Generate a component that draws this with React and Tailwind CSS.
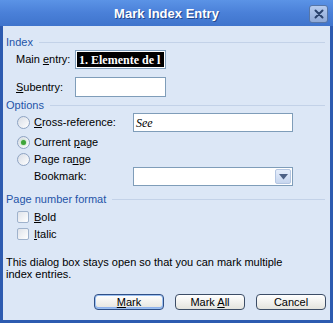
import React from 'react';

const font = "font-['Liberation_Sans',Arial,sans-serif]";

const U = ({ children }) => <span className="underline underline-offset-[1px]">{children}</span>;

const SectionHead = ({ title }) => (
  <div className="flex items-center h-4 gap-[6px] pr-[5px]">
    <span className="text-[#1f54a8]">{title}</span>
    <div className="flex-1 h-px bg-[#c3d2e8]" />
  </div>
);

const Radio = ({ checked }) => (
  <span className="w-[13px] h-[13px] rounded-full border border-[#8ea3c2] bg-gradient-to-br from-[#d8dde6] to-white flex items-center justify-center shrink-0">
    {checked && <span className="w-[5px] h-[5px] rounded-full bg-[#3fa53a] shadow-[0_0_2px_#7bd46f]" />}
  </span>
);

const Check = () => (
  <span className="w-[12px] h-[12px] rounded-[2px] border border-[#9fb2cc] bg-gradient-to-br from-[#dfe3ea] to-white shrink-0" />
);

const Btn = ({ children, primary }) => (
  <div
    className={`w-[70px] h-[16px] rounded-[4px] border flex items-center justify-center bg-gradient-to-b from-white to-[#e4e4de] ${
      primary ? 'border-[#2f4f86] shadow-[inset_0_0_0_1px_#9cc0f0,inset_0_-1px_0_1px_#8fb2ec]' : 'border-[#3c4d66]'
    }`}
  >
    <span>{children}</span>
  </div>
);

export default function App() {
  return (
    <div className={`w-[333px] h-[323px] bg-[#2d5bb0] flex flex-col text-[11px] leading-none text-black ${font}`}>
      {/* title bar */}
      <div className="relative h-[26px] bg-gradient-to-b from-[#5b93e6] via-[#4a80d8] to-[#3f74cc] flex items-center justify-center">
        <span className="text-white font-bold text-[13px] [text-shadow:1px_1px_0_#24498c]">Mark Index Entry</span>
        <div className="absolute right-[5px] top-[5px] w-[19px] h-[18px] rounded-[3px] border border-[#5676a8] bg-gradient-to-b from-[#b6cbee] to-[#8fa9d6] flex items-center justify-center">
          <svg width="10" height="10" viewBox="0 0 10 10">
            <path d="M1.5 1.5 L8.5 8.5 M8.5 1.5 L1.5 8.5" stroke="#2a426c" strokeWidth="2" strokeLinecap="round" />
          </svg>
        </div>
      </div>

      {/* body */}
      <div className="flex-1 mx-[3px] mb-[3px] bg-[#dce7f6] pl-[3px] pt-[8px] flex flex-col">
        <SectionHead title="Index" />
        <div className="flex items-center h-[19px] pl-[10px]">
          <span className="w-[59px]">Main <U>e</U>ntry:</span>
          <div className="w-[91px] h-[19px] border border-[#7f9db9] bg-white p-[1px]">
            <div className="h-full bg-black text-white font-bold text-[12px] font-['Liberation_Serif',serif] flex items-center pl-[2px] overflow-hidden whitespace-nowrap">
              1. Elemente de l
            </div>
          </div>
        </div>
        <div className="flex items-center h-[20px] pl-[10px] mt-[8px]">
          <span className="w-[59px]"><U>S</U>ubentry:</span>
          <div className="w-[91px] h-[20px] border border-[#7f9db9] bg-white" />
        </div>

        <SectionHead title="Options" />
        <div className="flex items-center h-[19px] pl-[11px]">
          <Radio />
          <span className="ml-[4px] w-[99px]"><U>C</U>ross-reference:</span>
          <div className="w-[160px] h-[19px] border border-[#7f9db9] bg-white flex items-center pl-[2px] italic font-['Liberation_Serif',serif] text-[12px]">
            See
          </div>
        </div>
        <div className="flex items-center h-[18px] pl-[11px] mt-px">
          <Radio checked />
          <span className="ml-[4px]">Current <U>p</U>age</span>
        </div>
        <div className="flex items-center h-[16px] pl-[11px]">
          <Radio />
          <span className="ml-[4px]">Page ra<U>n</U>ge</span>
        </div>
        <div className="flex items-center h-[19px] pl-[28px]">
          <span className="w-[99px]">Bookmark:</span>
          <div className="w-[160px] h-[19px] border border-[#7f9db9] bg-white flex justify-end p-px">
            <div className="w-[16px] h-full rounded-[2px] border border-[#b4c6e2] bg-gradient-to-b from-[#e6eefb] to-[#c7d6ef] flex items-center justify-center">
              <svg width="9" height="6" viewBox="0 0 9 6">
                <path d="M0 0 H9 L4.5 5.5 Z" fill="#4d6185" />
              </svg>
            </div>
          </div>
        </div>

        <div className="mt-[5px]">
          <SectionHead title="Page number format" />
        </div>
        <div className="flex items-center h-[18px] pl-[11px] mt-px">
          <Check />
          <span className="ml-[5px]"><U>B</U>old</span>
        </div>
        <div className="flex items-center h-[16px] pl-[11px]">
          <Check />
          <span className="ml-[5px]"><U>I</U>talic</span>
        </div>

        <p className="mt-[14px] leading-[12px]">
          This dialog box stays open so that you can mark multiple
          <br />
          index entries.
        </p>

        <div className="flex justify-end gap-[11px] pr-[4px] mt-[14px]">
          <Btn primary><U>M</U>ark</Btn>
          <Btn>Mark <U>A</U>ll</Btn>
          <Btn>Cancel</Btn>
        </div>
      </div>
    </div>
  );
}
